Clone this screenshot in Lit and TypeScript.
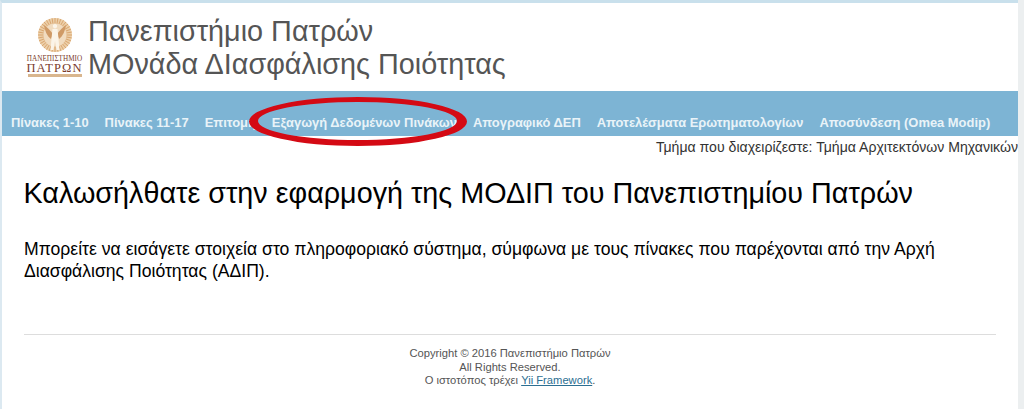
import { LitElement, html, css, svg } from "lit";
import { customElement } from "lit/decorators.js";

const menu = [
  "Πίνακες 1-10",
  "Πίνακες 11-17",
  "Επιτομή",
  "Εξαγωγή Δεδομένων Πινάκων",
  "Απογραφικό ΔΕΠ",
  "Αποτελέσματα Ερωτηματολογίων",
  "Αποσύνδεση (Omea Modip)",
];

const rays = Array.from({ length: 36 }, (_, i) => (i * Math.PI) / 18);

@customElement("app-root")
export class AppRoot extends LitElement {
  static styles = css`
    :host {
      display: block;
      width: 1024px;
      height: 409px;
      overflow: hidden;
      background: #fff;
      font-family: "Liberation Sans", Arial, sans-serif;
      color: #000;
      position: relative;
    }
    .page {
      box-sizing: border-box;
      width: 1018px;
      height: 409px;
      border-top: 3px solid #c9e0ec;
      border-left: 2px solid #dce9f1;
    }
    .header {
      height: 88px;
      box-sizing: border-box;
      padding: 13px 0 0 25px;
      display: flex;
      gap: 6px;
    }
    .logo {
      width: 55px;
      height: 64px;
      display: flex;
      flex-direction: column;
      align-items: center;
      flex: none;
    }
    .logo svg { display: block; filter: blur(0.5px); }
    .lt1 {
      font-family: "Liberation Serif", serif;
      font-size: 7.2px;
      line-height: 8px;
      color: #7a3b2c;
      white-space: nowrap;
    }
    .lt2 {
      font-family: "Liberation Serif", serif;
      font-size: 12.5px;
      line-height: 10px;
      letter-spacing: 1.1px;
      color: #7a3b2c;
      white-space: nowrap;
    }
    .lbar { width: 54px; height: 3px; margin-top: 1px; background: #d9b68e; }
    .title {
      font-size: 28.8px;
      line-height: 33px;
      color: #555;
      white-space: nowrap;
      margin-top: -1px;
    }
    .nav {
      height: 45px;
      background: #7db4d4;
      display: flex;
      align-items: center;
      box-sizing: border-box;
      padding: 17px 0 0 9px;
      gap: 16px;
      font-size: 12.93px;
      font-weight: bold;
      color: #e9f3f8;
      white-space: nowrap;
    }
    .dept {
      text-align: right;
      font-size: 14.08px;
      line-height: 22px;
      color: #333;
      white-space: nowrap;
    }
    .content { padding: 16px 22px 0; }
    h1 {
      margin: 0 0 0 -0.5px;
      font-size: 28.75px;
      line-height: 38px;
      font-weight: normal;
    }
    p {
      margin: 26px 0 0;
      font-size: 17.6px;
      line-height: 22px;
      width: 950px;
    }
    .rule { height: 1px; background: #ddd; margin: 52px 22px 0; }
    .footer {
      margin-top: 12px;
      text-align: center;
      font-size: 11.2px;
      line-height: 13.5px;
      color: #555;
    }
    .footer a { color: #2c6f92; text-decoration: underline; }
    .ellipse {
      position: absolute;
      left: 0;
      top: 0;
      pointer-events: none;
    }
    .side {
      position: absolute;
      right: 0;
      top: 0;
      width: 6px;
      height: 409px;
      background: #eceff0;
    }
  `;

  render() {
    return html`
      <div class="page">
        <div class="header">
          <div class="logo">
            <svg width="36" height="39" viewBox="0 0 36 39">
              <circle cx="18" cy="19" r="17" fill="#eccfa8"></circle>
              ${rays.map(
                (a) => svg`<line x1=${18 + 11 * Math.cos(a)} y1=${19 + 11 * Math.sin(a)} x2=${18 + 17 * Math.cos(a)} y2=${19 + 17 * Math.sin(a)} stroke="#d9a671" stroke-width="1"></line>`
              )}
              <circle cx="18" cy="19" r="11.5" fill="#f1dcc0"></circle>
              ${svg`<path d="M7 9c3 2 6 5 9 9l-2 5c-4-3-6-8-7-14zM29 9c-3 2-6 5-9 9l2 5c4-3 6-8 7-14z" fill="#cf9a66"></path>
              <path d="M18 8a2.2 2.2 0 1 1-.01 0zM15.5 13h5l1 10 1 11h-3l-1.500-9-1.500 9h-3l1-11z" fill="#fbf4e8"></path>`}
            </svg>
            <div class="lt1">ΠΑΝΕΠΙΣΤΗΜΙΟ</div>
            <div class="lt2">ΠΑΤΡΩΝ</div>
            <div class="lbar"></div>
          </div>
          <div class="title">Πανεπιστήμιο Πατρών<br />ΜΟνάδα ΔΙασφάλισης Ποιότητας</div>
        </div>
        <nav class="nav">${menu.map((m) => html`<span>${m}</span>`)}</nav>
        <div class="dept">Τμήμα που διαχειρίζεστε: Τμήμα Αρχιτεκτόνων Μηχανικών</div>
        <div class="content">
          <h1>Καλωσήλθατε στην εφαρμογή της ΜΟΔΙΠ του Πανεπιστημίου Πατρών</h1>
          <p>Μπορείτε να εισάγετε στοιχεία στο πληροφοριακό σύστημα, σύμφωνα με τους πίνακες που παρέχονται από την Αρχή Διασφάλισης Ποιότητας (ΑΔΙΠ).</p>
        </div>
        <div class="rule"></div>
        <div class="footer">
          Copyright © 2016 Πανεπιστήμιο Πατρών<br />
          All Rights Reserved.<br />
          Ο ιστοτόπος τρέχει <a href="#">Yii Framework</a>.
        </div>
      </div>
      <div class="side"></div>
      <svg class="ellipse" width="1024" height="409" viewBox="0 0 1024 409">
        <path fill="#d40a14" fill-rule="evenodd" d="M249 121.5a109 24.5 0 1 0 218 0a109 24.5 0 1 0 -218 0z M258 121a99.5 19 0 1 0 199 0a99.5 19 0 1 0 -199 0z"></path>
      </svg>
    `;
  }
}
